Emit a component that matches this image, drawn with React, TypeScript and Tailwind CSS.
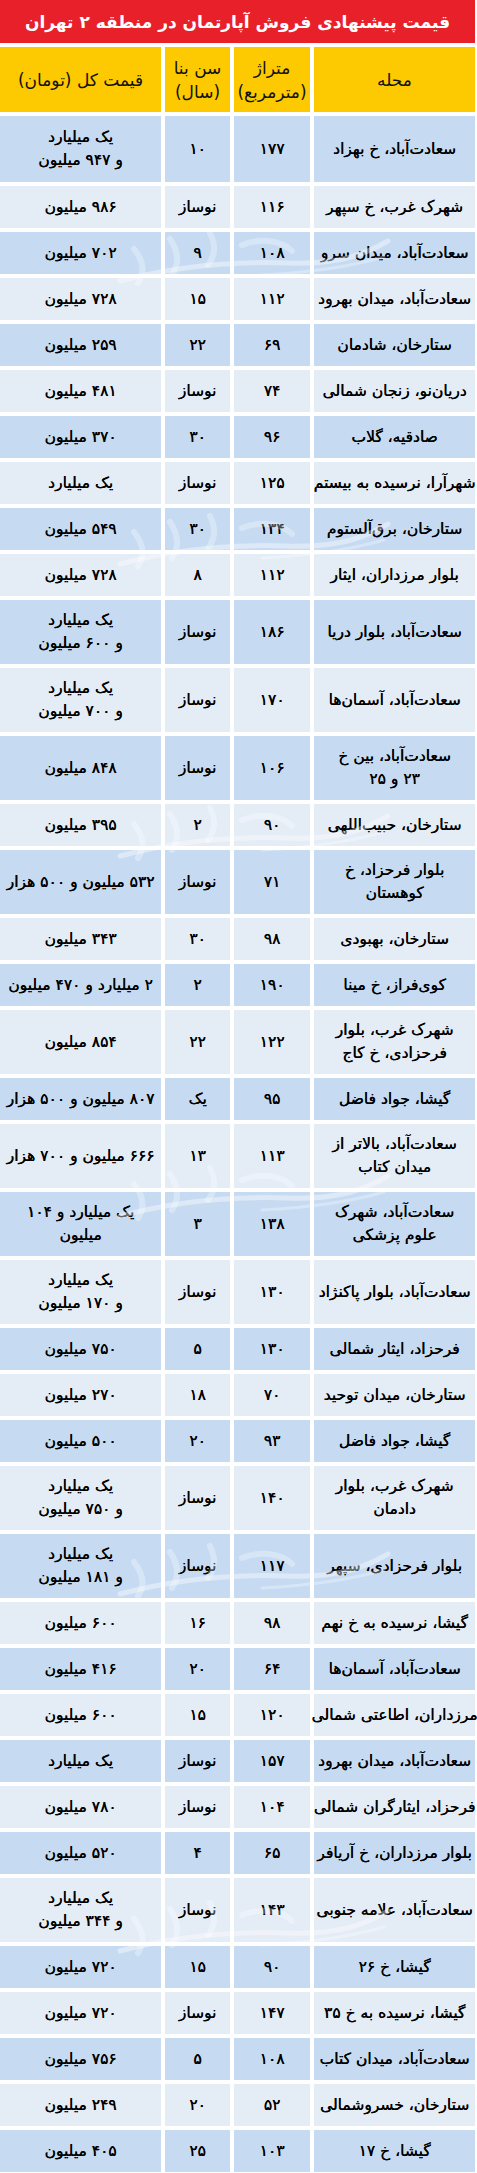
import React from "react";

type Row = [string, string, string, string];

const rows: Row[] = [
  ["سعادت\u200cآباد، خ بهزاد", "۱۷۷", "۱۰", "یک میلیارد\nو ۹۴۷ میلیون"],
  ["شهرک غرب، خ سپهر", "۱۱۶", "نوساز", "۹۸۶ میلیون"],
  ["سعادت\u200cآباد، میدان سرو", "۱۰۸", "۹", "۷۰۲ میلیون"],
  ["سعادت\u200cآباد، میدان بهرود", "۱۱۲", "۱۵", "۷۲۸ میلیون"],
  ["ستارخان، شادمان", "۶۹", "۲۲", "۲۵۹ میلیون"],
  ["دریان\u200cنو، زنجان شمالی", "۷۴", "نوساز", "۴۸۱ میلیون"],
  ["صادقیه، گلاب", "۹۶", "۳۰", "۳۷۰ میلیون"],
  ["شهرآرا، نرسیده به بیستم", "۱۲۵", "نوساز", "یک میلیارد"],
  ["ستارخان، برق\u200cآلستوم", "۱۳۴", "۳۰", "۵۴۹ میلیون"],
  ["بلوار مرزداران، ایثار", "۱۱۲", "۸", "۷۲۸ میلیون"],
  ["سعادت\u200cآباد، بلوار دریا", "۱۸۶", "نوساز", "یک میلیارد\nو ۶۰۰ میلیون"],
  ["سعادت\u200cآباد، آسمان\u200cها", "۱۷۰", "نوساز", "یک میلیارد\nو ۷۰۰ میلیون"],
  ["سعادت\u200cآباد، بین خ\n۲۳ و ۲۵", "۱۰۶", "نوساز", "۸۴۸ میلیون"],
  ["ستارخان، حبیب\u200cاللهی", "۹۰", "۲", "۳۹۵ میلیون"],
  ["بلوار فرحزاد، خ\nکوهستان", "۷۱", "نوساز", "۵۳۲ میلیون و ۵۰۰ هزار"],
  ["ستارخان، بهبودی", "۹۸", "۳۰", "۳۴۳ میلیون"],
  ["کوی\u200cفراز، خ مینا", "۱۹۰", "۲", "۲ میلیارد و ۴۷۰ میلیون"],
  ["شهرک غرب، بلوار\nفرحزادی، خ کاج", "۱۲۲", "۲۲", "۸۵۴ میلیون"],
  ["گیشا، جواد فاضل", "۹۵", "یک", "۸۰۷ میلیون و ۵۰۰ هزار"],
  ["سعادت\u200cآباد، بالاتر از\nمیدان کتاب", "۱۱۳", "۱۳", "۶۶۶ میلیون و ۷۰۰ هزار"],
  ["سعادت\u200cآباد، شهرک\nعلوم پزشکی", "۱۳۸", "۳", "یک میلیارد و ۱۰۴\nمیلیون"],
  ["سعادت\u200cآباد، بلوار پاکنژاد", "۱۳۰", "نوساز", "یک میلیارد\nو ۱۷۰ میلیون"],
  ["فرحزاد، ایثار شمالی", "۱۳۰", "۵", "۷۵۰ میلیون"],
  ["ستارخان، میدان توحید", "۷۰", "۱۸", "۲۷۰ میلیون"],
  ["گیشا، جواد فاضل", "۹۳", "۲۰", "۵۰۰ میلیون"],
  ["شهرک غرب، بلوار\nدادمان", "۱۴۰", "نوساز", "یک میلیارد\nو ۷۵۰ میلیون"],
  ["بلوار فرحزادی، سپهر", "۱۱۷", "نوساز", "یک میلیارد\nو ۱۸۱ میلیون"],
  ["گیشا، نرسیده به خ نهم", "۹۸", "۱۶", "۶۰۰ میلیون"],
  ["سعادت\u200cآباد، آسمان\u200cها", "۶۴", "۲۰", "۴۱۶ میلیون"],
  ["مرزداران، اطاعتی شمالی", "۱۲۰", "۱۵", "۶۰۰ میلیون"],
  ["سعادت\u200cآباد، میدان بهرود", "۱۵۷", "نوساز", "یک میلیارد"],
  ["فرحزاد، ایثارگران شمالی", "۱۰۴", "نوساز", "۷۸۰ میلیون"],
  ["بلوار مرزداران، خ آریافر", "۶۵", "۴", "۵۲۰ میلیون"],
  ["سعادت\u200cآباد، علامه جنوبی", "۱۴۳", "نوساز", "یک میلیارد\nو ۳۴۴ میلیون"],
  ["گیشا، خ ۲۶", "۹۰", "۱۵", "۷۲۰ میلیون"],
  ["گیشا، نرسیده به خ ۳۵", "۱۴۷", "نوساز", "۷۲۰ میلیون"],
  ["سعادت\u200cآباد، میدان کتاب", "۱۰۸", "۵", "۷۵۶ میلیون"],
  ["ستارخان، خسروشمالی", "۵۲", "۲۰", "۲۴۹ میلیون"],
  ["گیشا، خ ۱۷", "۱۰۳", "۲۵", "۴۰۵ میلیون"],
];

const FONT = { fontFamily: '"DejaVu Sans", sans-serif' };

function Lines({ text }: { text: string }) {
  return (
    <>
      {text.split("\n").map((l, i) => (
        <span key={i} className="block whitespace-nowrap">
          {l}
        </span>
      ))}
    </>
  );
}

function Cell({ text, bg }: { text: string; bg: string }) {
  return (
    <div
      className={`${bg} flex flex-col items-center justify-center text-center text-[15.5px] leading-[23px] text-black [text-shadow:0.35px_0_0_#000]`}
    >
      <Lines text={text} />
    </div>
  );
}

const watermarks = [215, 498, 790, 1150, 1528, 1885];

function Watermark({ top }: { top: number }) {
  return (
    <div
      aria-hidden="true"
      className="absolute left-[112px] w-[280px] h-[80px] pointer-events-none"
      style={{ top }}
    >
      <svg width="280" height="80" viewBox="0 0 280 80" className="absolute inset-0">
        <path
          d="M8 66 C 60 52, 120 46, 175 48 S 255 38, 276 26"
          stroke="white"
          strokeOpacity="0.4"
          strokeWidth="5"
          fill="none"
          strokeLinecap="round"
        />
        <path
          d="M22 34 C 30 44, 34 56, 26 68 M 58 24 C 66 36, 68 48, 60 60 M 98 18 C 104 30, 104 40, 96 50 M 130 30 C 150 22, 170 26, 180 36"
          stroke="white"
          strokeOpacity="0.3"
          strokeWidth="6"
          fill="none"
          strokeLinecap="round"
        />
        <path
          d="M150 60 C 190 58, 230 54, 272 42"
          stroke="white"
          strokeOpacity="0.3"
          strokeWidth="3"
          fill="none"
          strokeLinecap="round"
        />
      </svg>
    </div>
  );
}

export default function App() {
  return (
    <div className="w-[477px] bg-white relative" style={FONT}>
      <div dir="rtl" className="w-[475px] flex flex-col gap-[4px]">
        <div className="h-[43px] bg-[#e8202a] flex items-center justify-center pt-[2px] text-white font-bold text-[17px] whitespace-nowrap">
          قیمت پیشنهادی فروش آپارتمان در منطقه ۲ تهران
        </div>
        <div className="grid grid-cols-[161px_76px_65px_161px] gap-x-[4px] h-[65px]">
          {["محله", "متراژ\n(مترمربع)", "سن بنا\n(سال)", "قیمت کل (تومان)"].map((h, i) => (
            <div
              key={i}
              className="bg-[#fdc900] flex flex-col items-center justify-center text-center text-[17px] leading-[24px] text-[#111]"
            >
              <Lines text={h} />
            </div>
          ))}
        </div>
        {rows.map((r, i) => {
          const dbl = r.some((c) => c.includes("\n"));
          const h = i === 0 ? "h-[66px]" : dbl ? "h-[64px]" : "h-[42px]";
          const bg = i % 2 === 0 ? "bg-[#c6dbf2]" : "bg-[#e4ecf6]";
          return (
            <div key={i} className={`grid grid-cols-[161px_76px_65px_161px] gap-x-[4px] ${h}`}>
              {r.map((c, j) => (
                <Cell key={j} text={c} bg={bg} />
              ))}
            </div>
          );
        })}
      </div>
      {watermarks.map((t) => (
        <Watermark key={t} top={t} />
      ))}
    </div>
  );
}
